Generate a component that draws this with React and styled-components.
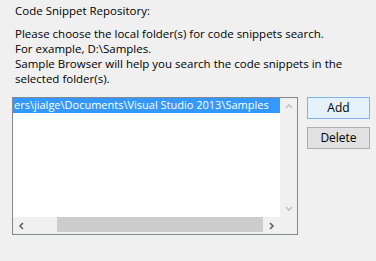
import React from "react";
import styled, { createGlobalStyle } from "styled-components";

const GlobalStyle = createGlobalStyle`
  html, body {
    margin: 0;
    padding: 0;
    background: #f0f0f0;
  }
  body {
    font-family: "Open Sans", "Noto Sans", sans-serif;
    font-size: 11.5px;
    color: #000;
  }
`;

const Page = styled.div`
  width: 376px;
  height: 261px;
  padding-top: 3px;
  box-sizing: border-box;
  overflow: hidden;
`;

const Title = styled.div`
  padding-left: 15px;
  line-height: 15px;
`;

const Intro = styled.p`
  margin: 8px 0 0;
  padding-left: 15px;
  line-height: 15px;
  width: 350px;
`;

const Row = styled.div`
  display: flex;
  align-items: flex-start;
  gap: 9px;
  margin: 11px 0 0 12px;
`;

const ListBox = styled.div`
  width: 286px;
  height: 138px;
  flex: none;
  box-sizing: border-box;
  border: 1px solid #828790;
  background: #fff;
  display: flex;
  flex-direction: column;
`;

const ListBody = styled.div`
  flex: 1;
  display: flex;
  min-height: 0;
`;

const Viewport = styled.div`
  flex: 1;
  min-width: 0;
  overflow: hidden;
  white-space: nowrap;
`;

const Item = styled.div`
  height: 15px;
  line-height: 14px;
  padding-left: 1px;
  font-size: 11px;
  background: ${(p) => (p.$selected ? "#3399ff" : "transparent")};
  color: ${(p) => (p.$selected ? "#fff" : "#000")};
`;

const VScroll = styled.div`
  width: 17px;
  flex: none;
  background: #f0f0f0;
  display: flex;
  flex-direction: column;
  justify-content: space-between;
`;

const HScroll = styled.div`
  flex: none;
  height: 17px;
  background: #f0f0f0;
  display: flex;
`;

const ArrowBtn = styled.div`
  width: 17px;
  height: 17px;
  flex: none;
  display: flex;
  align-items: center;
  justify-content: center;
`;

const Track = styled.div`
  flex: 1;
  display: flex;
  padding-left: 27px;
`;

const Thumb = styled.div`
  width: 206px;
  height: 15px;
  background: #cdcdcd;
`;

const Corner = styled.div`
  width: 17px;
  flex: none;
  background: #f0f0f0;
`;

const Buttons = styled.div`
  display: flex;
  flex-direction: column;
  gap: 8px;
`;

const Button = styled.button`
  width: 63px;
  height: 22px;
  box-sizing: border-box;
  padding: 0;
  font: inherit;
  font-size: 12px;
  color: #000;
  border: 1px solid ${(p) => (p.$focused ? "#7eb4ea" : "#adadad")};
  background: ${(p) => (p.$focused ? "#e5f1fb" : "#e1e1e1")};
  line-height: 18px;
`;

const Chevron = ({ dir, color }) => {
  const paths = {
    left: "M5 1 L2 4 L5 7",
    right: "M2 1 L5 4 L2 7",
    up: "M1 5 L4 2 L7 5",
    down: "M1 2 L4 5 L7 2",
  };
  return (
    <svg width="8" height="8" viewBox="0 0 8 8">
      <path d={paths[dir]} fill="none" stroke={color} strokeWidth="1.6" />
    </svg>
  );
};

export default function App() {
  return (
    <Page>
      <GlobalStyle />
      <Title>Code Snippet Repository:</Title>
      <Intro>
        Please choose the local folder(s) for code snippets search.
        <br />
        For example, D:\Samples.
        <br />
        Sample Browser will help you search the code snippets in the
        <br />
        selected folder(s).
      </Intro>
      <Row>
        <ListBox>
          <ListBody>
            <Viewport>
              <Item $selected>ers\jialge\Documents\Visual Studio 2013\Samples</Item>
            </Viewport>
            <VScroll>
              <ArrowBtn>
                <Chevron dir="up" color="#c2c2c2" />
              </ArrowBtn>
              <ArrowBtn>
                <Chevron dir="down" color="#c2c2c2" />
              </ArrowBtn>
            </VScroll>
          </ListBody>
          <HScroll>
            <ArrowBtn>
              <Chevron dir="left" color="#606060" />
            </ArrowBtn>
            <Track>
              <Thumb />
            </Track>
            <ArrowBtn>
              <Chevron dir="right" color="#606060" />
            </ArrowBtn>
            <Corner />
          </HScroll>
        </ListBox>
        <Buttons>
          <Button $focused>Add</Button>
          <Button>Delete</Button>
        </Buttons>
      </Row>
    </Page>
  );
}
